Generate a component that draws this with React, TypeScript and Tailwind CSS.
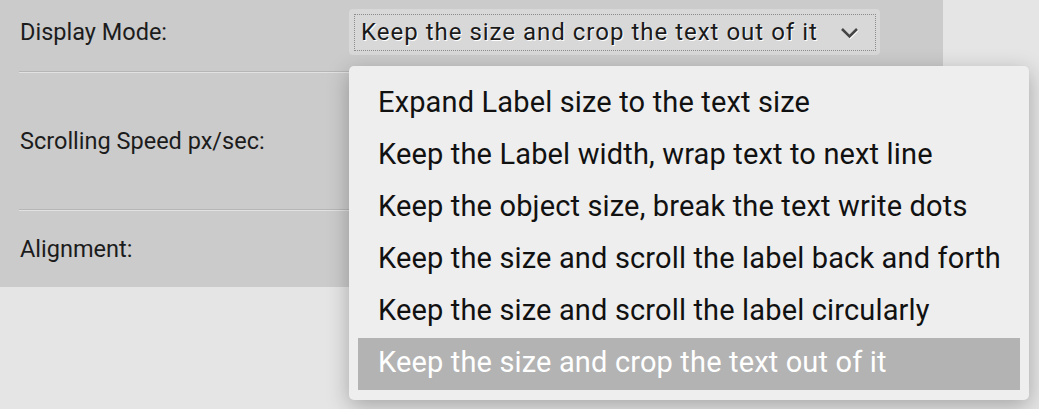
import React from "react";

const items = [
  "Expand Label size to the text size",
  "Keep the Label width, wrap text to next line",
  "Keep the object size, break the text write dots",
  "Keep the size and scroll the label back and forth",
  "Keep the size and scroll the label circularly",
  "Keep the size and crop the text out of it",
];

function Divider() {
  return (
    <div className="h-[2px] border-t border-t-[#b6b6b6] border-b border-b-[#e2e2e2]" />
  );
}

export default function App() {
  return (
    <div
      className="relative w-[1039px] h-[409px] overflow-hidden bg-[#e5e5e5]"
      style={{ fontFamily: "Roboto, 'Liberation Sans', sans-serif" }}
    >
      <div className="w-[943px] bg-[#cbcbcb] px-[19px] text-[23.5px] leading-[25px] text-[#1c1c1c]">
        <div className="flex h-[71px] items-start">
          <div className="w-[330px] pl-[1px] pt-[20px]">Display Mode:</div>
          <div className="mt-[9px] h-[46px] w-[531px] rounded-[4px] bg-[#d8d8d8] pl-[5px] pr-[4px] pt-[5px] pb-[4px]">
            <div className="flex h-[37px] items-center justify-between border border-dotted border-[#8c8c8c] pl-[6px] pr-[16px]">
              <span
                className="text-[24px] leading-[35px] tracking-[1px] text-[#1a1a1a] whitespace-nowrap"
                style={{ textShadow: "1px 1px 0 #ffffff" }}
              >
                Keep the size and crop the text out of it
              </span>
              <svg width="19" height="12" viewBox="0 0 19 12" className="mt-[1px]">
                <polyline
                  points="2,2 9.5,9.5 17,2"
                  fill="none"
                  stroke="#ffffff"
                  strokeWidth="2.6"
                  transform="translate(0.8,0.8)"
                />
                <polyline
                  points="2,2 9.5,9.5 17,2"
                  fill="none"
                  stroke="#454545"
                  strokeWidth="2.6"
                />
              </svg>
            </div>
          </div>
        </div>
        <Divider />
        <div className="h-[136px] pl-[1px] pt-[56px]">Scrolling Speed px/sec:</div>
        <Divider />
        <div className="h-[76px] pl-[1px] pt-[26px]">Alignment:</div>
      </div>

      <div className="absolute left-[349px] top-[66px] w-[680px] h-[334px] rounded-[5px] bg-[#eeeeee] pt-[12px] px-[9px] pb-[9px] shadow-[0_6px_22px_rgba(0,0,0,0.28)]">
        {items.map((t, i) => (
          <div
            key={t}
            className={
              i === items.length - 1
                ? "h-[52px] pl-[20px] text-[29px] leading-[49px] tracking-[0.15px] whitespace-nowrap bg-[#b3b3b3] text-white"
                : "h-[52px] pl-[20px] text-[29px] leading-[49px] tracking-[0.15px] whitespace-nowrap text-[#111111]"
            }
          >
            {t}
          </div>
        ))}
      </div>
    </div>
  );
}
